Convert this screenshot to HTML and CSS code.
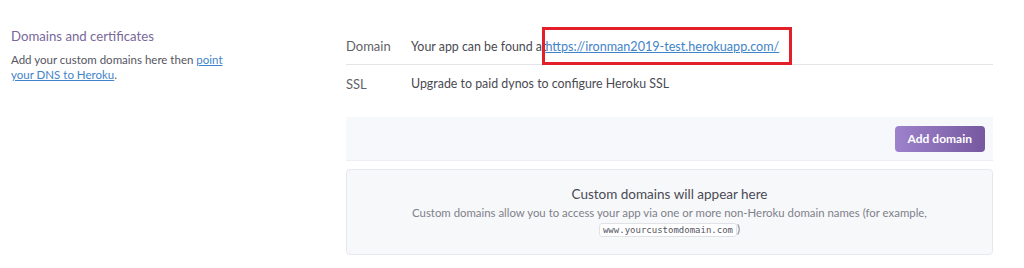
FILE: index.html
```html
<!DOCTYPE html>
<html lang="en">
<head>
  <meta charset="UTF-8">
  <title>Domains and certificates</title>
  <link rel="stylesheet" href="styles.css">
</head>
<body>
  <div class="section">
    <div class="section-info">
      <h3>Domains and certificates</h3>
      <p>Add your custom domains here then <a href="#">point your DNS to Heroku</a>.</p>
    </div>

    <div class="section-body">
      <div class="row">
        <div class="row-label">Domain</div>
        <div class="row-value">Your app can be found at<span class="highlight"><a href="#">https://ironman2019-test.herokuapp.com/</a></span></div>
      </div>
      <div class="row">
        <div class="row-label">SSL</div>
        <div class="row-value">Upgrade to paid dynos to configure Heroku SSL</div>
      </div>

      <div class="toolbar">
        <button class="btn-add">Add domain</button>
      </div>

      <div class="empty">
        <div class="empty-title">Custom domains will appear here</div>
        <div class="empty-text">Custom domains allow you to access your app via one or more non-Heroku domain names (for example,<br><code>www.yourcustomdomain.com</code>)</div>
      </div>
    </div>
  </div>
</body>
</html>
```

FILE: styles.css
```css
body {
  margin: 0;
  background: #fff;
  font-family: Lato, "Open Sans", sans-serif;
  color: #3f3f44;
}
.section {
  display: flex;
  padding: 27px 0 0 11px;
}
.section-info {
  width: 225px;
  margin-right: 110px;
}
.section-info h3 {
  margin: 0;
  font-size: 13.2px;
  font-weight: normal;
  color: #79689a;
  line-height: 18px;
}
.section-info p {
  margin: 7px 0 0;
  font-size: 11.5px;
  line-height: 15px;
  color: #55555f;
}
.section-info a {
  color: #3f84c8;
}
.section-body {
  width: 647px;
}
.row {
  display: flex;
  align-items: center;
  height: 37px;
  font-size: 12.4px;
  color: #4a4a52;
}
.row + .row {
  height: 37px;
  border-top: 1px solid #e3e3e8;
}
.row-label {
  width: 65px;
  font-size: 13px;
  color: #5f5f68;
}
.highlight {
  display: inline-block;
  border: 3px solid #e3202a;
  padding: 9px 10px 8px 0;
  margin-left: -4px;
}
.highlight a {
  font-size: 12.6px;
  color: #3f84c8;
}
.toolbar {
  margin-top: 15px;
  display: flex;
  justify-content: flex-end;
  align-items: center;
  height: 43px;
  padding-right: 8px;
  background: #f7f8fb;
  border-bottom: 1px solid #eceef3;
}
.btn-add {
  height: 26px;
  padding: 0 13px;
  border: none;
  border-radius: 4px;
  background: linear-gradient(to right, #9d83cc, #76589f);
  color: #fff;
  font-family: Lato, sans-serif;
  font-weight: bold;
  font-size: 12px;
  cursor: pointer;
}
.empty {
  margin-top: 8px;
  height: 86px;
  box-sizing: border-box;
  border: 1px solid #e6e8ee;
  border-radius: 4px;
  background: #f7f8fa;
  text-align: center;
  padding-top: 15px;
}
.empty-title {
  font-size: 13.5px;
  color: #4a4a55;
  line-height: 18px;
}
.empty-text {
  margin-top: 2px;
  font-size: 11.4px;
  line-height: 16px;
  color: #80808a;
}
.empty-text code {
  font-family: "DejaVu Sans Mono", monospace;
  font-size: 9px;
  color: #55555f;
  background: #fff;
  border: 1px solid #e0e2e8;
  border-radius: 3px;
  padding: 1px 3px;
}
```
